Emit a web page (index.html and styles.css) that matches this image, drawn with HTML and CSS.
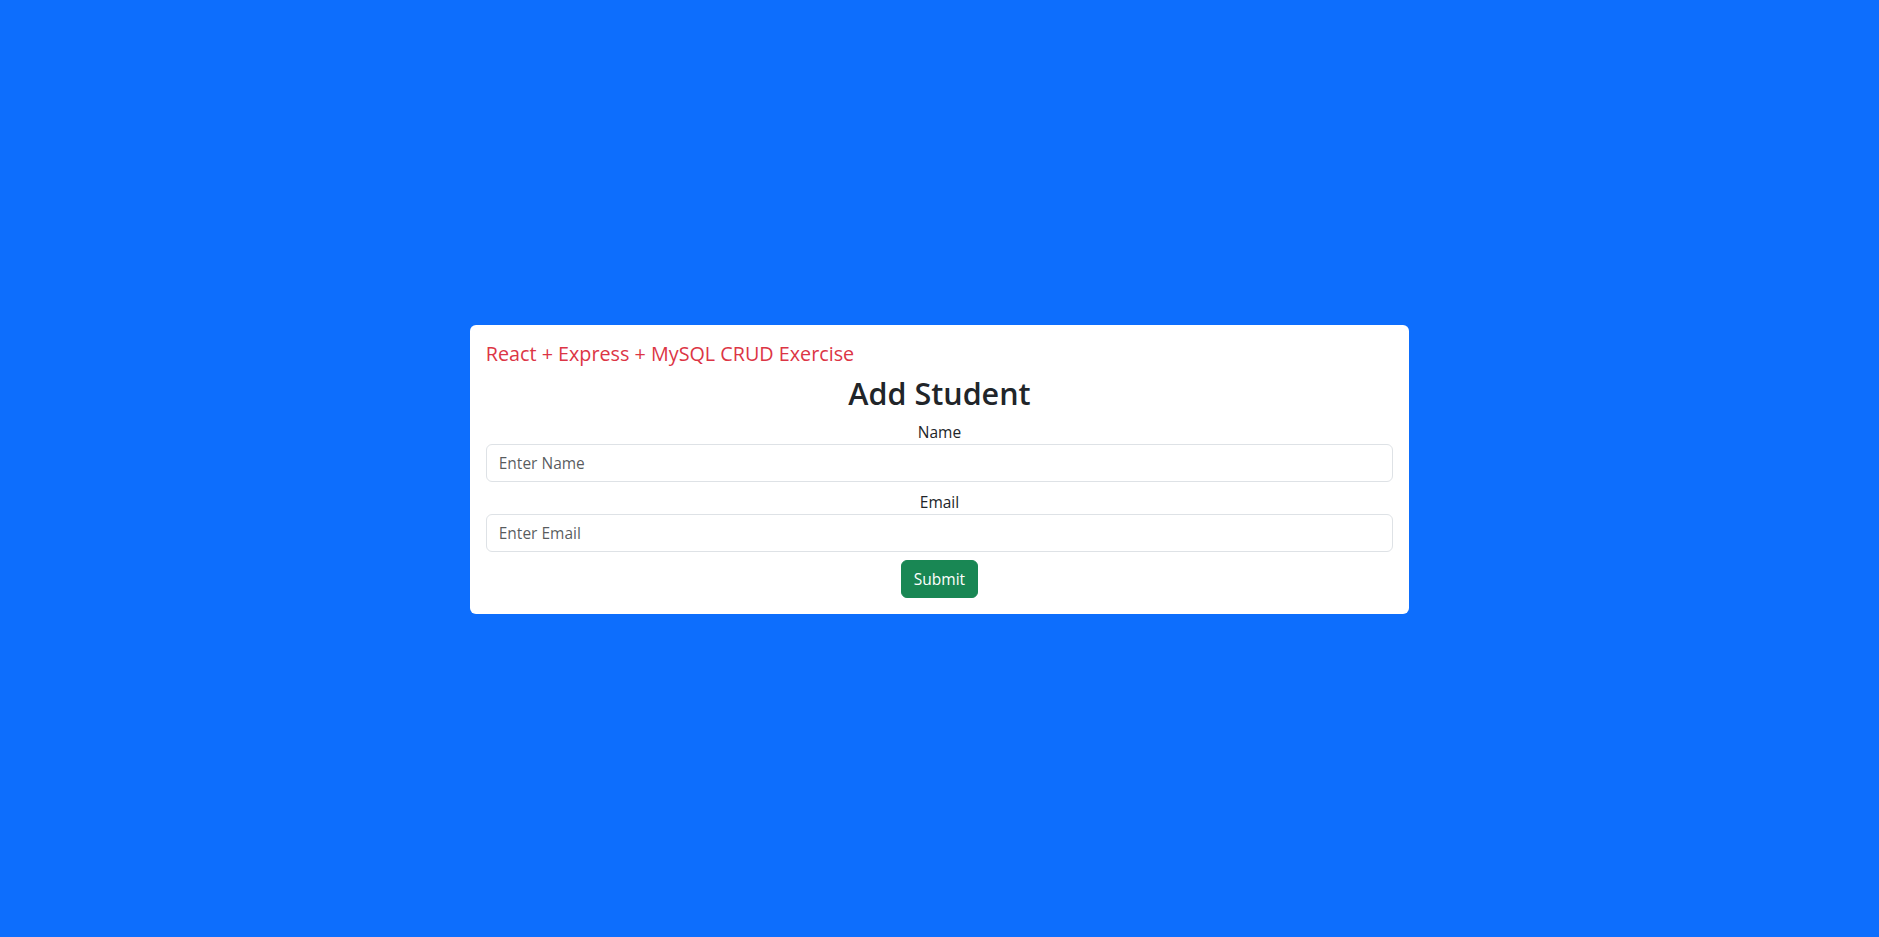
FILE: index.html
```html
<!DOCTYPE html>
<html lang="en">
<head>
<meta charset="utf-8">
<title>Add Student</title>
<link rel="stylesheet" href="styles.css">
</head>
<body>
<div class="page">
  <div class="card">
    <h5 class="app-title">React + Express + MySQL CRUD Exercise</h5>
    <form class="form">
      <h2 class="heading">Add Student</h2>
      <div class="field">
        <label class="label" for="name">Name</label>
        <input class="input" id="name" type="text" placeholder="Enter Name">
      </div>
      <div class="field">
        <label class="label" for="email">Email</label>
        <input class="input" id="email" type="email" placeholder="Enter Email">
      </div>
      <div class="actions">
        <button class="btn-submit" type="button">Submit</button>
      </div>
    </form>
  </div>
</div>
</body>
</html>
```

FILE: styles.css
```css
* { box-sizing: border-box; }
html, body { margin: 0; padding: 0; }
body {
  font-family: "Open Sans", "Noto Sans", sans-serif;
  font-size: 16px;
  line-height: 1.5;
  color: #212529;
  background: #0d6efd;
}
.page {
  height: 100vh;
  display: flex;
  justify-content: center;
  align-items: center;
  padding-top: 2px;
  background: #0d6efd;
}
.card {
  width: 50%;
  background: #fff;
  border-radius: 6px;
  padding: 17px 16px 16px;
}
.app-title {
  margin: 0 0 8px;
  font-size: 19.75px;
  font-weight: 400;
  line-height: 24px;
  color: #dc3545;
}
.form { margin: 0; text-align: center; }
.heading {
  margin: 0 0 8px;
  font-size: 30.5px;
  font-weight: 600;
  line-height: 38.4px;
  color: #212529;
}
.field { margin-bottom: 8px; }
.label { display: inline-block; font-size: 15.5px; }
.input {
  display: block;
  width: 100%;
  height: 38px;
  padding: 6px 12px;
  font-family: inherit;
  font-size: 15.5px;
  line-height: 1.5;
  color: #212529;
  background: #fff;
  border: 1px solid #dee2e6;
  border-radius: 6px;
  text-align: left;
}
.input::placeholder { color: rgba(33, 37, 41, 0.75); }
.actions { display: flex; justify-content: center; }
.btn-submit {
  height: 38px;
  padding: 6px 12px;
  font-family: inherit;
  font-size: 15.5px;
  line-height: 1.5;
  color: #fff;
  background: #198754;
  border: 1px solid #198754;
  border-radius: 6px;
}
```
